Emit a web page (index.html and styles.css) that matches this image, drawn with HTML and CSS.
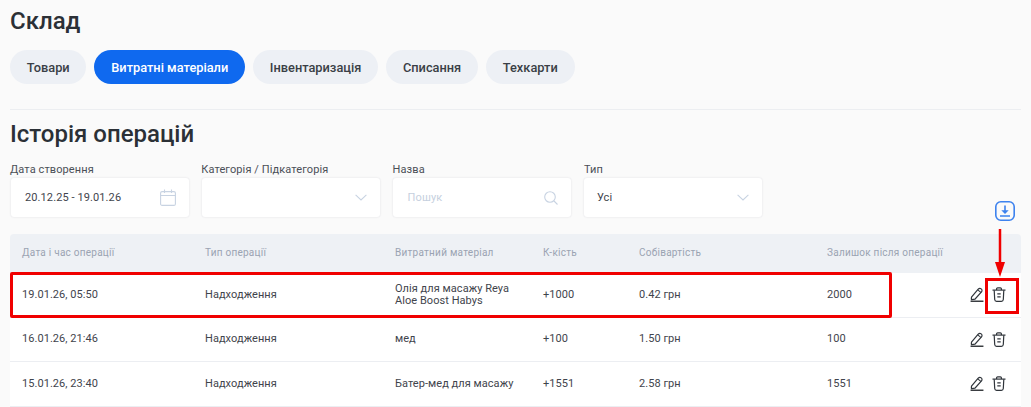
FILE: index.html
```html
<!DOCTYPE html>
<html lang="uk">
<head>
<meta charset="utf-8">
<title>Склад</title>
<link rel="stylesheet" href="styles.css">
</head>
<body>
<svg class="defs" width="0" height="0" aria-hidden="true">
  <symbol id="pen" viewBox="0 0 15 16"><path d="M1.800 10.500 8.800 2.300c.9-1 2.200-1.100 3.200-.3 1 .8 1.100 2.200.3 3.200L5.300 13c-1.200.4-2.300.5-3.700.5-.2-1-.2-2 .2-3Z" fill="none" stroke="#30353b" stroke-width="1.300"/><path d="M8.300 3l3.600 3" stroke="#30353b" stroke-width="1.100"/><path d="M.6 15.200h13.800" stroke="#1d2125" stroke-width="1.400" fill="none"/></symbol>
  <symbol id="bin" viewBox="0 0 14 15"><g fill="none" stroke="#30353b" stroke-width="1.200"><path d="M.5 3.100h13"/><path d="M4.600 3V1.800c0-.6.400-1 1-1h2.800c.6 0 1 .4 1 1V3"/><path d="M2.200 3.200l.5 9.300c.1 1.100.8 1.800 1.900 1.800h4.800c1.100 0 1.800-.7 1.900-1.800l.5-9.300"/><path d="M5.300 6.800h3.400M5.300 9.800h3.400"/></g></symbol>
</svg>
<main class="page">
  <h1 class="title">Склад</h1>
  <nav class="tabs">
    <a class="tab">Товари</a>
    <a class="tab tab-active">Витратні матеріали</a>
    <a class="tab">Інвентаризація</a>
    <a class="tab">Списання</a>
    <a class="tab">Техкарти</a>
  </nav>
  <hr class="divider">
  <h2 class="subtitle">Історія операцій</h2>
  <section class="filters">
    <div class="field">
      <div class="label">Дата створення</div>
      <div class="control"><span class="value date-value">20.12.25 - 19.01.26</span>
        <svg class="ic" width="16" height="17" viewBox="0 0 16 17"><g fill="none" stroke="#c8d3e2" stroke-width="1.100"><rect x=".6" y="2.600" width="14.800" height="13.800" rx="1.500"/><path d="M.6 6.500h14.800M4.500.6v3.500M11.500.6v3.500"/></g></svg>
      </div>
    </div>
    <div class="field">
      <div class="label">Категорія / Підкатегорія</div>
      <div class="control"><span class="value"></span>
        <svg class="ic" width="12" height="7" viewBox="0 0 12 7"><path d="M.6.800 6 6l5.400-5.200" fill="none" stroke="#c8d3e2" stroke-width="1.100"/></svg>
      </div>
    </div>
    <div class="field">
      <div class="label">Назва</div>
      <div class="control"><span class="value placeholder">Пошук</span>
        <svg class="ic" width="14" height="14" viewBox="0 0 14 14"><g fill="none" stroke="#c8d3e2" stroke-width="1.100"><circle cx="6" cy="6" r="5.300"/><path d="m10 10 3.500 3.500"/></g></svg>
      </div>
    </div>
    <div class="field">
      <div class="label">Тип</div>
      <div class="control control-type"><span class="value">Усі</span>
        <svg class="ic" width="12" height="7" viewBox="0 0 12 7"><path d="M.6.800 6 6l5.400-5.200" fill="none" stroke="#c8d3e2" stroke-width="1.100"/></svg>
      </div>
    </div>
  </section>
  <div class="export">
    <svg width="20" height="20" viewBox="0 0 20 20"><g fill="none" stroke="#3d82ee" stroke-width="1.600"><rect x=".8" y=".8" width="18.400" height="18.400" rx="5"/><path d="M10 4.500v7.500M5 15h10"/></g><path d="M6.300 9.300h7.400L10 13Z" fill="#3d82ee"/></svg>
  </div>
  <div class="table">
    <div class="row row-head">
      <div>Дата і час операції</div><div>Тип операції</div><div>Витратний матеріал</div><div>К-кість</div><div>Собівартість</div><div>Залишок після операції</div><div></div>
    </div>
    <div class="row">
      <div>19.01.26, 05:50</div><div>Надходження</div><div>Олія для масажу Reya<br>Aloe Boost Habys</div><div>+1000</div><div>0.42 грн</div><div>2000</div>
      <div class="actions"><svg width="14" height="15"><use href="#pen"/></svg><svg width="14" height="15"><use href="#bin"/></svg></div>
    </div>
    <div class="row">
      <div>16.01.26, 21:46</div><div>Надходження</div><div>мед</div><div>+100</div><div>1.50 грн</div><div>100</div>
      <div class="actions"><svg width="14" height="15"><use href="#pen"/></svg><svg width="14" height="15"><use href="#bin"/></svg></div>
    </div>
    <div class="row">
      <div>15.01.26, 23:40</div><div>Надходження</div><div>Батер-мед для масажу</div><div>+1551</div><div>2.58 грн</div><div>1551</div>
      <div class="actions"><svg width="14" height="15"><use href="#pen"/></svg><svg width="14" height="15"><use href="#bin"/></svg></div>
    </div>
  </div>
</main>
<div class="mark mark-row"></div>
<div class="mark mark-bin"></div>
<svg class="arrow" width="14" height="50" viewBox="0 0 14 50"><path d="M7 0v36" stroke="#f00000" stroke-width="2.500"/><path d="M2 33h10l-5 15Z" fill="#f00000"/></svg>
</body>
</html>
```
FILE: styles.css
```css
* { box-sizing: border-box; }
html, body { margin: 0; height: 407px; overflow: hidden; }
body {
  background: #fafafa;
  font-family: Roboto, "Noto Sans", sans-serif;
  color: #33383f;
  position: relative;
}
.defs { position: absolute; }
.page { padding: 6px 10px 0; }
.title {
  margin: 0;
  font-size: 24px;
  line-height: 30px;
  font-weight: 500;
  color: #2b3036;
}
.tabs { display: flex; gap: 8px; margin-top: 14px; }
.tab {
  display: flex;
  align-items: center;
  height: 34px;
  padding: 0 16.800px;
  border-radius: 17px;
  background: #edf0f5;
  font-size: 12.800px;
  font-weight: 500;
  color: #3a3f46;
}
.tab-active { background: #0f69ef; color: #fff; }
.divider {
  margin: 25px 0 0;
  border: 0;
  border-top: 1px solid #eceef1;
}
.subtitle {
  margin: 9px 0 0;
  font-size: 24px;
  line-height: 30px;
  font-weight: 500;
  color: #2b3036;
}
.filters { display: flex; gap: 13.300px; margin-top: 13px; padding-left: .500px; }
.field { width: 178px; }
.label { font-size: 11px; line-height: 15px; color: #4a4f57; letter-spacing: .1px; margin-left: -.500px; }
.control {
  display: flex;
  align-items: center;
  justify-content: space-between;
  height: 39px;
  margin-top: 1px;
  padding: 0 13px 0 14.500px;
  background: #fff;
  border-radius: 3px;
  box-shadow: 0 0 2px rgba(60, 70, 90, .16);
  font-size: 11px;
  letter-spacing: .1px;
}
.control-type { padding-left: 12.500px; }
.value { color: #3f444c; }
.placeholder { color: #c6d0de; }
.export { display: flex; justify-content: flex-end; height: 20px; margin-top: -16px; padding-right: 6px; }
.table { margin-top: 13px; }
.row {
  display: grid;
  grid-template-columns: 183px 190px 148px 96px 188px 1fr 60px;
  align-items: center;
  height: 44.500px;
  background: #fff;
  border-bottom: 1px solid #eceef2;
  font-size: 11px;
  line-height: 12px;
  letter-spacing: .05px;
  color: #3f444c;
}
.row > div { padding-left: 12px; }
.row-head {
  height: 39px;
  padding-bottom: 2px;
  background: #eef1f5;
  border-bottom: 0;
  border-radius: 4px 4px 0 0;
  font-size: 10px;
  color: #9aa3b2;
  letter-spacing: .25px;
}
.row > .actions { display: flex; align-items: center; justify-content: flex-end; gap: 8px; padding: 0 15px 0 0; }
.mark { position: absolute; border: 3px solid #f00000; }
.mark-row { left: 10px; top: 272px; width: 882px; height: 46px; border-radius: 2px; }
.mark-bin { left: 985px; top: 278px; width: 34px; height: 36px; }
.arrow { position: absolute; left: 993px; top: 229px; }
```
